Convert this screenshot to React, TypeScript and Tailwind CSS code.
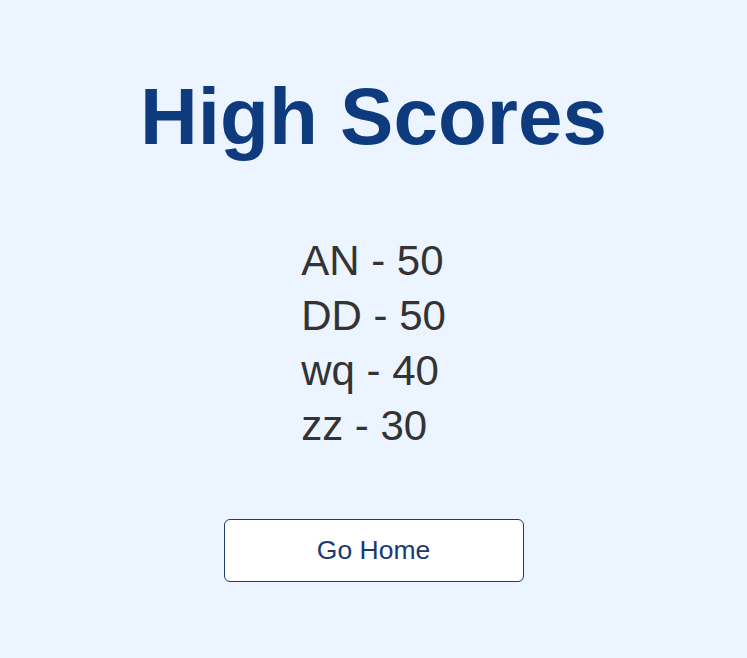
export default function App() {
  const scores = ["AN - 50", "DD - 50", "wq - 40", "zz - 30"];
  return (
    <div
      className="min-h-[658px] w-full bg-[#ebf4ff] flex flex-col items-center pt-[72px]"
      style={{ fontFamily: '"Liberation Sans", Arial, sans-serif' }}
    >
      <h1 className="text-[80px] leading-[90px] font-bold text-[#0e3a7e]">High Scores</h1>
      <ul className="mt-[71px] text-left text-[42px] leading-[55px] text-[#333333]">
        {scores.map((s) => (
          <li key={s}>{s}</li>
        ))}
      </ul>
      <button className="mt-[66px] w-[300px] h-[63px] bg-white border border-[#1e3a6e] rounded-[6px] text-[26.5px] text-[#1a3a70]">
        Go Home
      </button>
    </div>
  );
}
